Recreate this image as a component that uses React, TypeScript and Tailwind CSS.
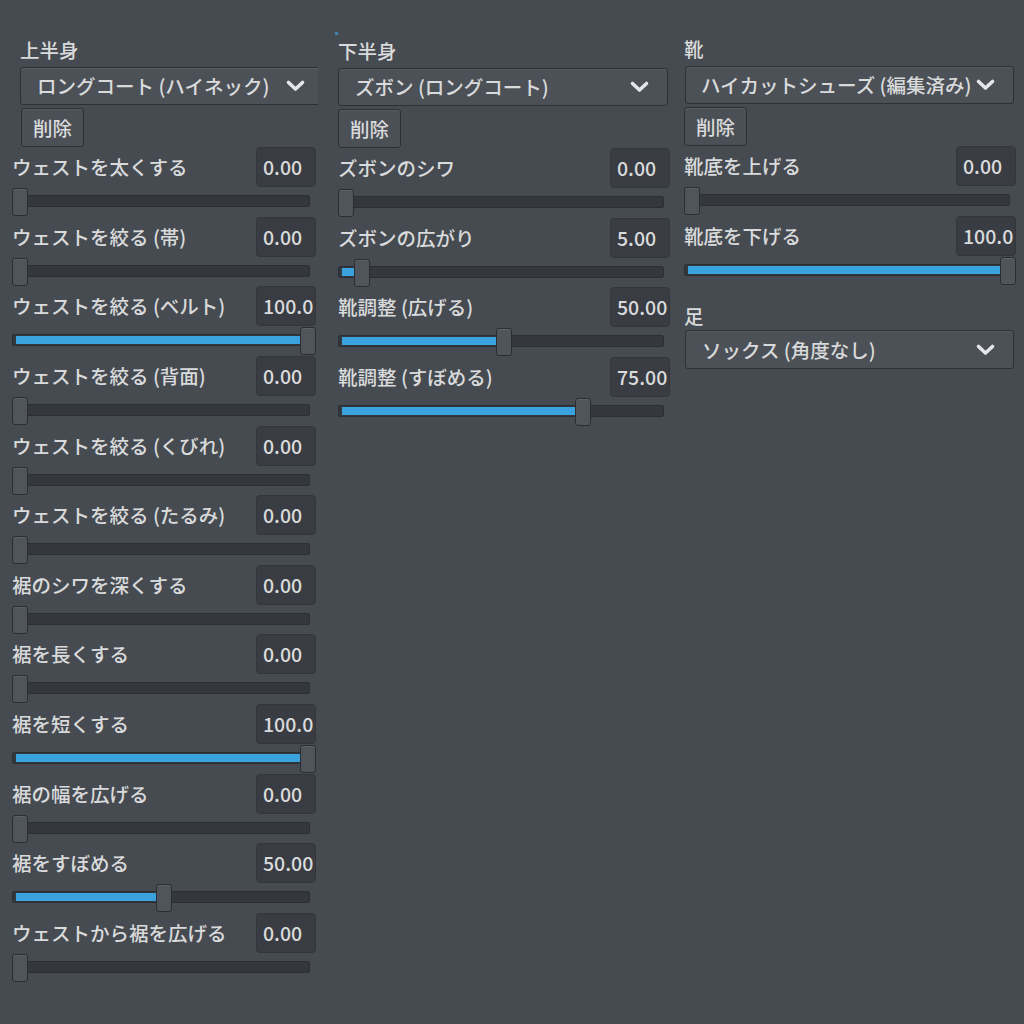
import React from 'react';

type SliderRow = { label: string; value: string; pct: number };

const upper: SliderRow[] = [
  { label: 'ウェストを太くする', value: '0.00', pct: 0 },
  { label: 'ウェストを絞る (帯)', value: '0.00', pct: 0 },
  { label: 'ウェストを絞る (ベルト)', value: '100.0', pct: 1 },
  { label: 'ウェストを絞る (背面)', value: '0.00', pct: 0 },
  { label: 'ウェストを絞る (くびれ)', value: '0.00', pct: 0 },
  { label: 'ウェストを絞る (たるみ)', value: '0.00', pct: 0 },
  { label: '裾のシワを深くする', value: '0.00', pct: 0 },
  { label: '裾を長くする', value: '0.00', pct: 0 },
  { label: '裾を短くする', value: '100.0', pct: 1 },
  { label: '裾の幅を広げる', value: '0.00', pct: 0 },
  { label: '裾をすぼめる', value: '50.00', pct: 0.5 },
  { label: 'ウェストから裾を広げる', value: '0.00', pct: 0 },
];

const lower: SliderRow[] = [
  { label: 'ズボンのシワ', value: '0.00', pct: 0 },
  { label: 'ズボンの広がり', value: '5.00', pct: 0.05 },
  { label: '靴調整 (広げる)', value: '50.00', pct: 0.5 },
  { label: '靴調整 (すぼめる)', value: '75.00', pct: 0.75 },
];

const shoes: SliderRow[] = [
  { label: '靴底を上げる', value: '0.00', pct: 0 },
  { label: '靴底を下げる', value: '100.0', pct: 1 },
];

const Chevron = () => (
  <svg width="21" height="14" viewBox="0 0 21 14" className="shrink-0">
    <polyline points="3.5,3.5 10.5,10 17.5,3.5" fill="none" stroke="#e4e6e8" strokeWidth="3.6" strokeLinecap="round" strokeLinejoin="round" />
  </svg>
);

const Dropdown = ({ text, className }: { text: string; className: string }) => (
  <div className={`flex items-center justify-between h-[38px] bg-[#4c5157] border border-[#2d3136] rounded-[3px] pl-[16px] pr-[17px] shadow-[inset_0_1px_0_#575c62] ${className}`}>
    <span className="whitespace-nowrap">{text}</span>
    <Chevron />
  </div>
);

const DeleteButton = ({ className = '' }: { className?: string }) => (
  <button className={`mt-[3px] w-[63px] h-[39px] flex items-center justify-center bg-[#4b5056] border border-[#2c3035] rounded-[3px] text-[#d9dadb] shadow-[inset_0_1px_0_#565b61] ${className}`}>
    削除
  </button>
);

const Slider = ({ pct }: { pct: number }) => (
  <div className="relative h-[28px] w-full">
    <div className="absolute left-0 right-[6px] top-[7px] h-[12px] bg-[#34383d] border border-[#2b2e33] rounded-[2px]" />
    {pct > 0 && (
      <div
        className="absolute left-[4px] top-[9px] h-[8px] bg-[#3aa2dc]"
        style={{ width: `calc((100% - 16px) * ${pct} - 2px)` }}
      />
    )}
    <div
      className="absolute top-0 w-[16px] h-[28px] bg-[#50555c] border border-[#2a2d32] rounded-[3px] shadow-[inset_0_1px_0_#5c6168]"
      style={{ left: `calc((100% - 16px) * ${pct})` }}
    />
  </div>
);

const Row = ({ row }: { row: SliderRow }) => (
  <div className="h-[69.65px] flex flex-col">
    <div className="flex items-center justify-between h-[40px]">
      <span className="whitespace-nowrap">{row.label}</span>
      <div className="w-[60px] h-[40px] flex items-center pl-[6px] bg-[#393d43] border border-[#33373c] rounded-[4px] overflow-hidden whitespace-nowrap">
        {row.value}
      </div>
    </div>
    <div className="mt-[1px]">
      <Slider pct={row.pct} />
    </div>
  </div>
);

export default function App() {
  return (
    <div
      className="relative w-[1024px] h-[1024px] overflow-hidden bg-[#464b51] text-[#d9dadb] text-[19.5px] leading-[24px] font-medium flex pl-[12px]"
      style={{ fontFamily: '"Noto Sans CJK JP", "Noto Sans", sans-serif' }}
    >
      <div className="absolute left-[335px] top-[32px] w-[3px] h-[3px] bg-[#3b84b3]" />

      {/* 上半身 */}
      <div className="w-[306px] overflow-hidden pt-[38px] flex flex-col">
        <div className="pl-[8px] h-[24px]">上半身</div>
        <Dropdown text="ロングコート (ハイネック)" className="mt-[5px] ml-[8px] w-[304px] shrink-0" />
        <DeleteButton className="ml-[9px]" />
        <div className="w-[304px]">
          {upper.map((r) => (
            <Row key={r.label} row={r} />
          ))}
        </div>
      </div>

      {/* 下半身 */}
      <div className="ml-[20px] w-[332px] pt-[39px] flex flex-col">
        <div className="h-[24px]">下半身</div>
        <Dropdown text="ズボン (ロングコート)" className="mt-[5px] w-[330px]" />
        <DeleteButton />
        <div>
          {lower.map((r) => (
            <Row key={r.label} row={r} />
          ))}
        </div>
      </div>

      {/* 靴 / 足 */}
      <div className="ml-[14px] w-[332px] pt-[37px] flex flex-col">
        <div className="h-[24px]">靴</div>
        <Dropdown text="ハイカットシューズ (編集済み)" className="mt-[5px] ml-[1px] w-[329px] !pl-[15px]" />
        <DeleteButton />
        <div>
          {shoes.map((r) => (
            <Row key={r.label} row={r} />
          ))}
        </div>
        <div className="mt-[19px] h-[24px]">足</div>
        <Dropdown text="ソックス (角度なし)" className="mt-[2px] ml-[1px] w-[329px] h-[39px]" />
      </div>
    </div>
  );
}
